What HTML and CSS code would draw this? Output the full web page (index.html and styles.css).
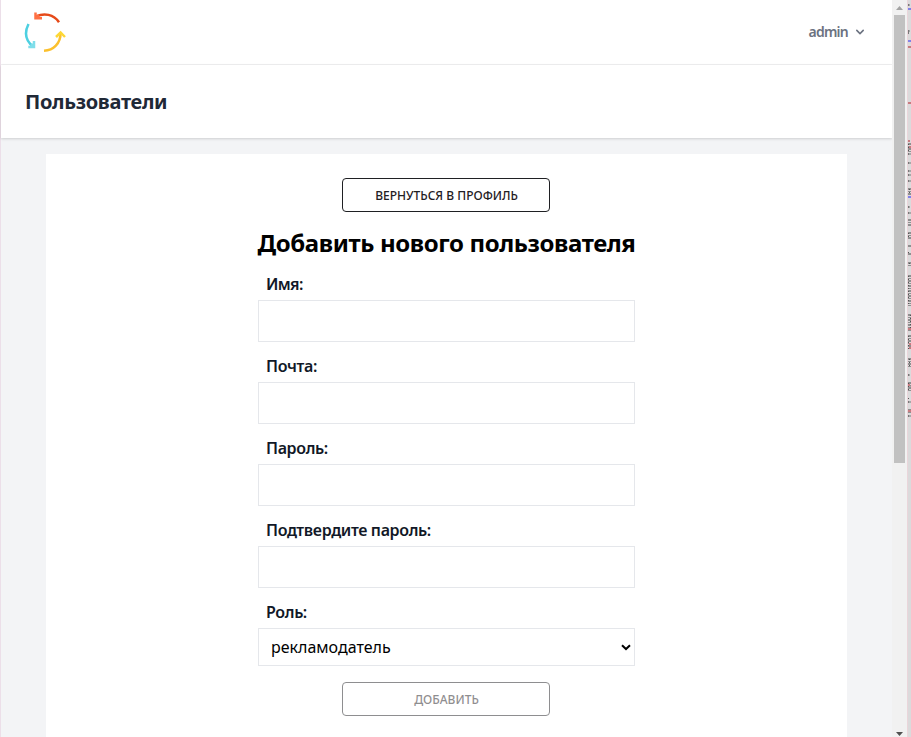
FILE: index.html
```html
<!DOCTYPE html>
<html lang="ru">
<head>
<meta charset="utf-8">
<title>Пользователи</title>
<link rel="stylesheet" href="styles.css">
</head>
<body>
<div class="window">
  <div class="page">
    <nav class="nav">
      <svg class="logo" width="42" height="42" viewBox="0 0 42 42" fill="none" stroke-width="2.5">
        <path d="M12.500 4.200C20 .8 29.500 2 35 10.200" stroke="#e64a19"/>
        <path d="M11.500 .5V6.300H18M11.500 6.300L15 3.300" stroke="#ff7043"/>
        <path d="M4.500 12C.5 20 1.200 28.500 9.500 35" stroke="#4dd0e1"/>
        <path d="M4.300 35H10V29M10 35L7 32" stroke="#80deea"/>
        <path d="M20 38.800C29.500 38.300 36.600 31.500 36.600 21" stroke="#fbc02d"/>
        <path d="M32 25L36.600 20.500L41 25" stroke="#fdd835"/>
      </svg>
      <button class="account">admin
        <svg width="16" height="16" viewBox="0 0 20 20" fill="currentColor"><path fill-rule="evenodd" d="M5.293 7.293a1 1 0 011.414 0L10 10.586l3.293-3.293a1 1 0 111.414 1.414l-4 4a1 1 0 01-1.414 0l-4-4a1 1 0 010-1.414z"/></svg>
      </button>
    </nav>
    <header class="header"><h2>Пользователи</h2></header>
    <main class="main">
      <section class="card">
        <a class="btn back">Вернуться в профиль</a>
        <h1>Добавить нового пользователя</h1>
        <form class="form">
          <label class="name" for="name">Имя:</label><input id="name" type="text">
          <label for="email">Почта:</label><input id="email" type="text">
          <label for="password">Пароль:</label><input id="password" type="password">
          <label for="confirm">Подтвердите пароль:</label><input id="confirm" type="password">
          <label>Роль:</label>
          <div class="select">рекламодатель
            <svg width="10" height="7" viewBox="0 0 10 7" fill="none" stroke="#000" stroke-width="2"><path d="M1 1.200L5 5L9 1.200"/></svg>
          </div>
        </form>
        <button class="btn add" disabled>Добавить</button>
      </section>
    </main>
  </div>
  <div class="scrollbar">
    <svg width="7" height="4" viewBox="0 0 7 4"><path d="M0 4L3.500 0L7 4Z" fill="#a3a3a3"/></svg>
    <div class="thumb"></div>
    <svg class="down" width="7" height="4" viewBox="0 0 7 4"><path d="M0 0L3.500 4L7 0Z" fill="#505050"/></svg>
  </div>
  <div class="edge">
    <svg width="3" height="737" viewBox="0 0 3 737" fill="none" stroke-width="3">
      <path stroke="#777" stroke-width="2" stroke-dasharray="1 .5" d="M0 5H2M0 31H2M0 33H1M0 154H3M0 163H3M0 171H3M0 175H3M0 181H3M0 207H2M0 213H3M0 375H2M0 386H3M0 402H3M0 416H3"/>
      <path stroke="#8f8f8f" stroke-dasharray="2 1 1 1" d="M1.500 143V153M1.500 188V195M1.500 219V226M1.500 232V239M1.500 245V248M1.500 253V255M1.500 262V266M1.500 275V306M1.500 314V332M1.500 335V350M1.500 358V367M1.500 382V391M1.500 409V414"/>
      <path stroke="#555" stroke-width="1" stroke-dasharray="1 2" d="M.5 144V152M1.500 189V195M.5 233V238M.5 252V255M1.500 263V266M.5 276V304M2.500 315V330M.5 336V349M1.500 359V366M.5 383V390M.5 398V401"/>
      <path stroke="#8080e8" stroke-width="2" d="M0 9H3M0 41H3M0 197H3"/>
      <path stroke="#c77b80" stroke-width="2" d="M0 47H3M0 103H3M0 141H2M1 147H3M0 329H3M1 344H3M1 348H3M0 385H2M0 411H3"/>
    </svg>
  </div>
</div>
</body>
</html>
```
FILE: styles.css
```css
* { box-sizing: border-box; }
body { margin: 0; height: 737px; overflow: hidden; font-family: "Noto Sans", "Open Sans", sans-serif; font-size: 16px; line-height: 24px; }
.window { display: flex; height: 737px; border-left: 1px solid #ecdfe9; }
.page { width: 891px; flex: none; background: #f3f4f6; }
.nav { height: 65px; background: #fff; border-bottom: 1px solid #f0f0f1; display: flex; justify-content: space-between; padding: 12px 24px 0; }
.logo { margin-left: -1px; }
.account { border: 0; background: none; padding: 0; height: 40px; display: flex; align-items: center; gap: 4px; color: #6b7280; font: 600 14px/20px "Noto Sans", sans-serif; letter-spacing: -.75px; }
.header { height: 73px; background: #fff; box-shadow: 0 1px 3px rgba(0,0,0,.1), 0 1px 2px rgba(0,0,0,.06); padding: 24px; }
h1, h2 { margin: 0; }
h2 { font-size: 20px; line-height: 25px; font-weight: 700; letter-spacing: -.3px; color: #1f2937; }
.main { padding: 16px 45px 0; }
.card { height: 583px; background: #fff; display: flex; flex-direction: column; align-items: center; padding-top: 24px; }
.btn { width: 208px; height: 34px; border: 1px solid #1f2023; border-radius: 4px; background: #fff; color: #1f2023; display: flex; align-items: center; justify-content: center; padding: 2px 0 0 1px; margin-right: 1px; font: 500 12px/16px "Noto Sans", sans-serif; text-transform: uppercase; flex: none; }
h1 { font-size: 24px; line-height: 32px; margin: 15px 0 13px; letter-spacing: -.38px; white-space: nowrap; }
.form { width: 377px; display: flex; flex-direction: column; }
label { height: 24px; padding-left: 8px; margin-bottom: 4px; font-weight: 600; letter-spacing: -.35px; color: #111827; }
.name { letter-spacing: -.65px; }
input { height: 42px; border: 1px solid #e5e7eb; margin: 0 0 12px; padding: 0 12px; }
.select { height: 38px; border: 1px solid #e5e7eb; display: flex; align-items: center; justify-content: space-between; padding: 0 3px 0 12px; }
.add { margin-top: 16px; opacity: .5; }
.scrollbar { width: 15px; flex: none; background: #f1f1f1; display: flex; flex-direction: column; align-items: center; padding-top: 6px; }
.thumb { width: 11px; height: 448px; background: #c1c1c1; margin-top: 5px; }
.down { margin-top: auto; margin-bottom: 1px; }
.edge { flex: 1; background: #dbdadb; border-left: 1px solid #ead5da; overflow: hidden; }
.edge svg { display: block; }
```
